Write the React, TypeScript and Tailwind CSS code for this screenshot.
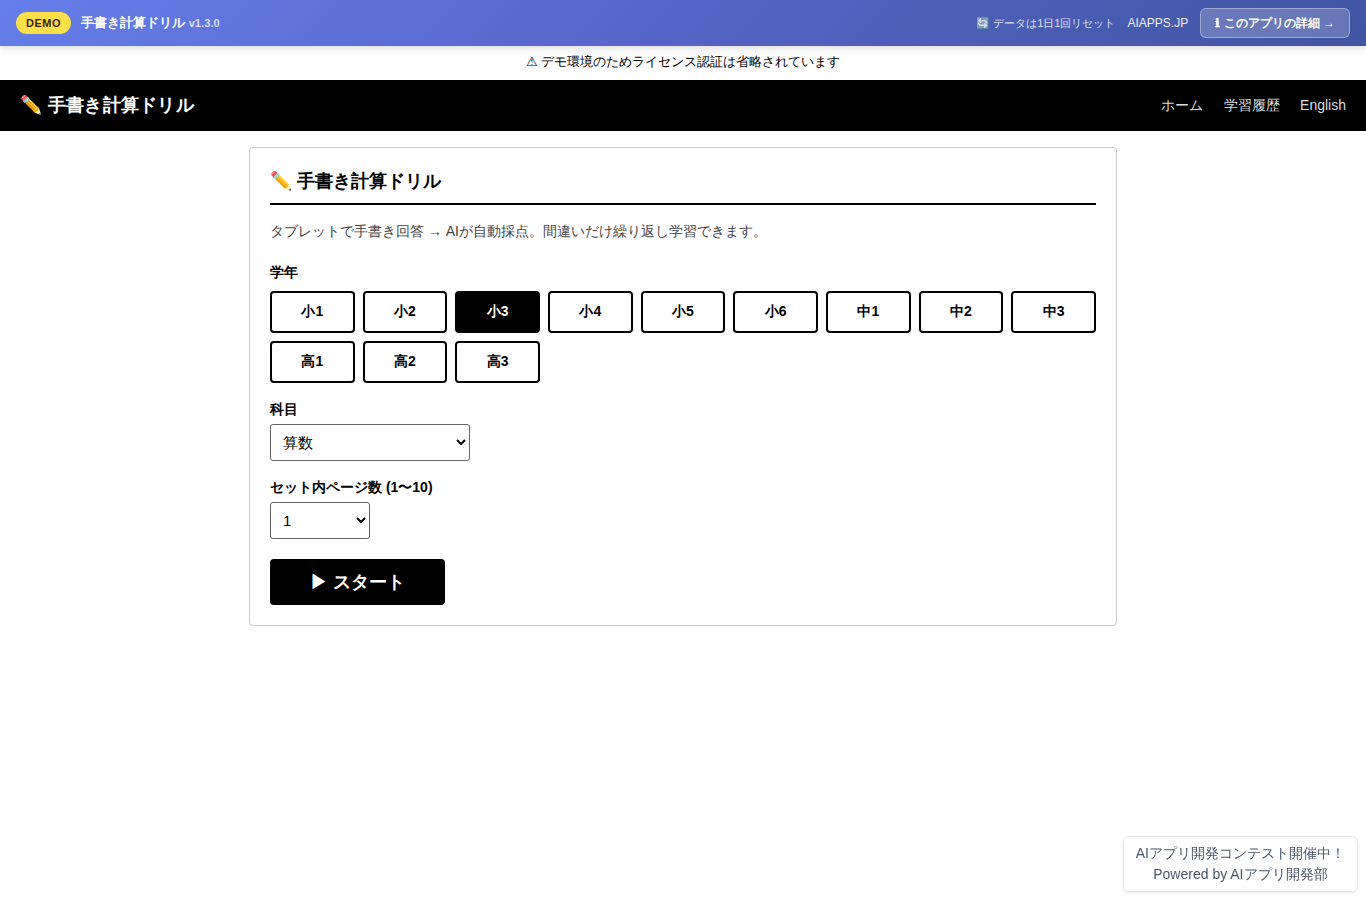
import { useState } from 'react'
import clsx from 'clsx'

const GRADES = ['小1', '小2', '小3', '小4', '小5', '小6', '中1', '中2', '中3', '高1', '高2', '高3']
const SUBJECTS = ['算数']
const PAGE_COUNTS = [1, 2, 3, 4, 5, 6, 7, 8, 9, 10]

function DemoBar() {
  return (
    <div className="relative z-10 flex h-[46px] items-center justify-between bg-[linear-gradient(135deg,#667eea_0%,#5564c6_50%,#4055a2_100%)] px-4 text-white shadow-[0_2px_8px_rgba(0,0,0,0.15)]">
      <div className="flex items-center gap-2.5">
        <span className="rounded-full bg-[#fddf47] px-2.5 py-1 text-[11px] leading-[14px] font-bold tracking-[0.5px] text-[#422006]">
          DEMO
        </span>
        <span className="text-[13px] font-semibold">
          手書き計算ドリル <span className="text-[11px] tracking-[0.1px] opacity-75">v1.3.0</span>
        </span>
      </div>
      <div className="flex items-center gap-3">
        <span className="text-[11px] opacity-80">🔄 データは1日1回リセット</span>
        <a href="#" className="text-xs opacity-90">AIAPPS.JP</a>
        <a
          href="#"
          className="block h-[30px] rounded-md border border-white/35 bg-white/20 px-3.5 text-xs leading-7 font-semibold"
        >
          <span className="mr-[0.6px] font-['DejaVu_Sans',sans-serif] [-webkit-text-stroke:0.5px_white]">ℹ</span>{' '}
          このアプリの詳細 →
        </a>
      </div>
    </div>
  )
}

function Header() {
  return (
    <header className="flex h-[51px] items-start justify-between bg-black px-5 py-3">
      <h1 className="text-lg leading-[27px] font-bold tracking-[0.3px] text-white">✏️ 手書き計算ドリル</h1>
      <nav className="mt-[3px] flex gap-5 text-sm leading-[21px] text-[#dddddd]">
        <a href="#" className="mr-px">ホーム</a>
        <a href="#">学習履歴</a>
        <a href="#">English</a>
      </nav>
    </header>
  )
}

export default function App() {
  const [grade, setGrade] = useState('小3')
  const [subject, setSubject] = useState('算数')
  const [pages, setPages] = useState(1)

  return (
    <div lang="ja" className="min-h-screen bg-white font-['Liberation_Sans',sans-serif] text-black">
      <DemoBar />
      <div className="flex h-[34px] items-center justify-center pb-0.5 text-[13px]">
        <p>⚠ デモ環境のためライセンス認証は省略されています</p>
      </div>
      <Header />

      <main className="mx-auto max-w-[900px] p-4">
        <section className="h-[479px] rounded border border-[#cccccc] p-5">
          <h2 className="mb-4 h-[37px] border-b-2 border-black text-lg leading-[27px] font-bold">
            ✏️ 手書き計算ドリル
          </h2>
          <p className="mb-5 text-sm leading-[21px] text-[#444444]">
            タブレットで手書き回答 → AIが自動採点。間違いだけ繰り返し学習できます。
          </p>

          <div className="mb-4">
            <label className="mb-2 block text-sm leading-[21px] font-bold">学年</label>
            <div className="grid grid-cols-9 gap-2">
              {GRADES.map((g) => (
                <button
                  key={g}
                  type="button"
                  onClick={() => setGrade(g)}
                  className={clsx(
                    'h-[42px] rounded border-2 border-black pb-0.5 text-sm font-bold',
                    g === grade ? 'bg-black text-white' : 'bg-white text-black',
                  )}
                >
                  {g}
                </button>
              ))}
            </div>
          </div>

          <div className="mb-4">
            <label className="mb-1 block text-sm leading-[21px] font-bold">科目</label>
            <select
              value={subject}
              onChange={(e) => setSubject(e.target.value)}
              className="block h-[37px] w-[200px] rounded-[3px] border border-[#666666] bg-white px-2 text-[15px]"
            >
              {SUBJECTS.map((s) => (
                <option key={s}>{s}</option>
              ))}
            </select>
          </div>

          <div className="mb-5">
            <label className="mb-1 block text-sm leading-[21px] font-bold">セット内ページ数 (1〜10)</label>
            <select
              value={pages}
              onChange={(e) => setPages(Number(e.target.value))}
              className="block h-[37px] w-[100px] rounded-[3px] border border-[#666666] bg-white px-2 text-[15px]"
            >
              {PAGE_COUNTS.map((n) => (
                <option key={n}>{n}</option>
              ))}
            </select>
          </div>

          <button type="button" className="h-[46px] w-[175px] rounded bg-black text-lg font-bold text-white">
            ▶ スタート
          </button>
        </section>
      </main>

      <div className="fixed right-2 bottom-2 rounded-md border border-[#e5e7eb] bg-white/95 px-3 py-1.5 text-center text-sm leading-[21px] text-[#4a5568] shadow-[0_1px_3px_rgba(0,0,0,0.1)]">
        <p>AIアプリ開発コンテスト開催中！</p>
        <p>Powered by AIアプリ開発部</p>
      </div>
    </div>
  )
}
